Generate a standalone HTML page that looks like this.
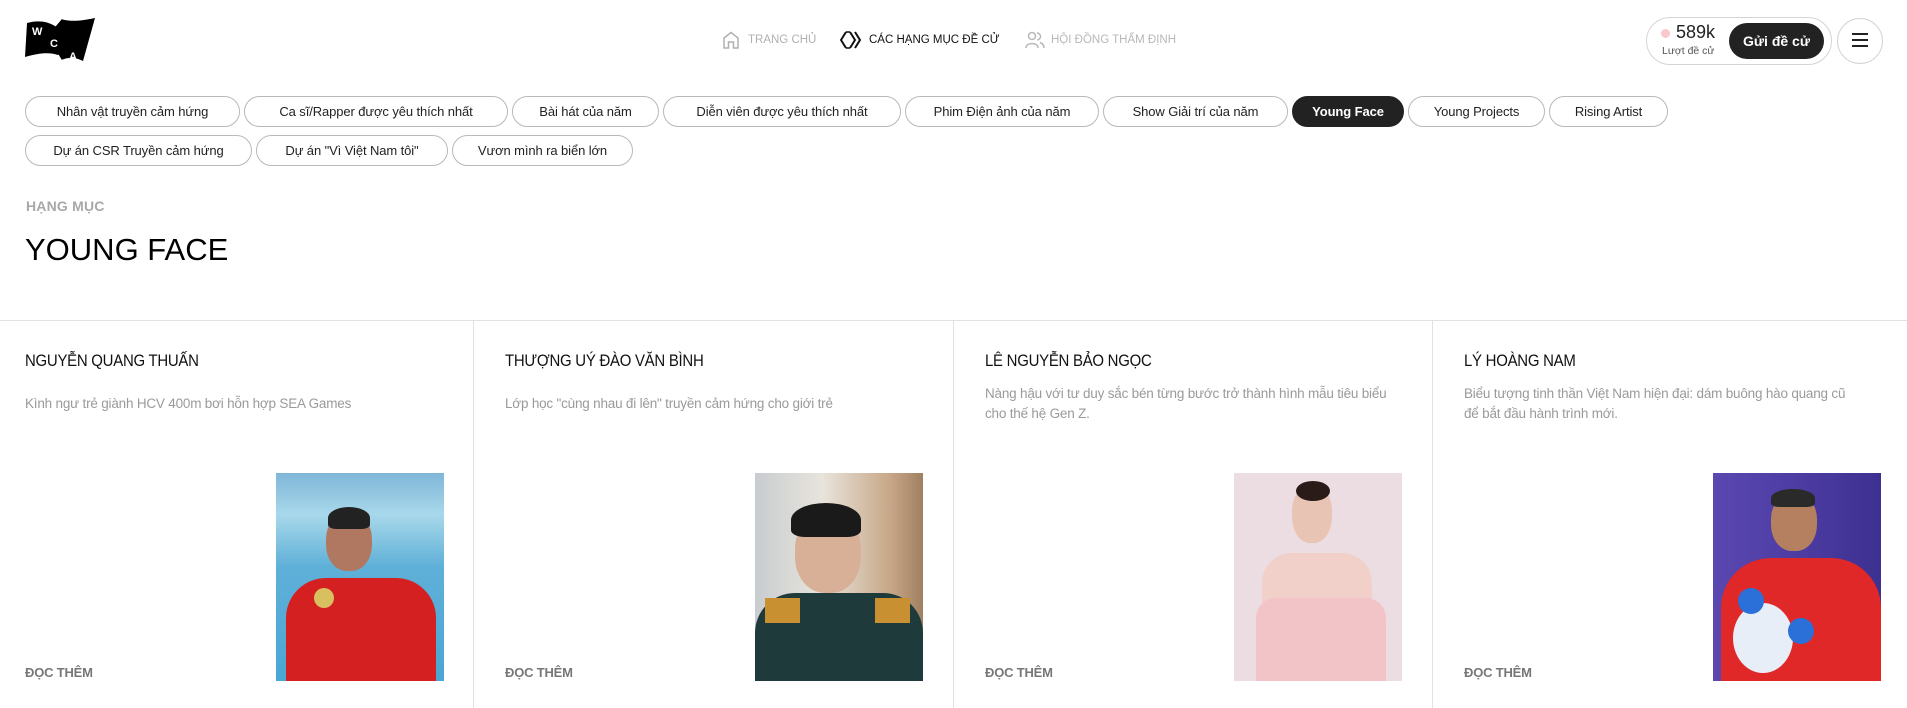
<!DOCTYPE html>
<html><head><meta charset="utf-8">
<style>
*{margin:0;padding:0;box-sizing:border-box}
body{width:1907px;height:708px;overflow:hidden;background:#fff;font-family:"Liberation Sans","Noto Sans CJK SC",sans-serif;color:#111;position:relative}
.abs{position:absolute}
.nav{top:31px;height:18px;font-size:11.5px;display:flex;align-items:center;white-space:nowrap}
.chip{position:absolute;height:31px;border:1px solid #b8b8b8;border-radius:16px;font-size:13px;color:#222;display:flex;align-items:center;justify-content:center;white-space:nowrap;letter-spacing:-0.1px}
.chip.on{background:#222;color:#fff;border-color:#222;font-weight:bold}
.name{position:absolute;top:351px;font-size:17px;letter-spacing:-0.3px;color:#111;white-space:nowrap;transform:scaleX(0.88);transform-origin:left center}
.desc{position:absolute;top:394px;font-size:13.5px;line-height:20px;color:#9a9a9a;width:400px;letter-spacing:-0.2px}
.more{position:absolute;top:665px;font-size:13px;color:#777;font-weight:bold;letter-spacing:-0.2px}
.img{position:absolute;top:473px;width:168px;height:208px;overflow:hidden}
.vl{position:absolute;top:321px;width:1px;height:387px;background:#e2e2e2}
</style></head><body>

<svg class="abs" style="left:25px;top:17px" width="72" height="46" viewBox="0 0 72 46">
<path d="M2 6 C12 3 22 4 30 9 L36 2 C46 5 56 4 70 1 L58 44 C50 40 44 40 36 43 L33 38 C24 35 14 36 0 40 Z" fill="#000"/>
<path d="M30 9 L36 2 M33 38 L36 43" stroke="#fff" stroke-width="1.5"/>
<text x="7" y="18" font-size="11" font-weight="bold" fill="#fff" font-family="Liberation Sans">W</text>
<text x="25" y="30" font-size="11" font-weight="bold" fill="#fff" font-family="Liberation Sans">C</text>
<text x="44" y="43" font-size="11" font-weight="bold" fill="#fff" font-family="Liberation Sans">A</text>
</svg>

<div class="abs nav" style="left:722px;color:#b0b0b0">
<svg width="18" height="18" viewBox="0 0 18 18"><path d="M2 17 V7 L9 1.5 L16 7 V17 H11.5 V11 H6.5 V17 Z" fill="none" stroke="#b0b0b0" stroke-width="1.5"/></svg>
<span style="margin-left:8px">TRANG CHỦ</span></div>
<div class="abs nav" style="left:840px;color:#111">
<svg width="22" height="18" viewBox="0 0 22 18"><path d="M6 1 L1 9 L6 17 M10 1 L15 9 L10 17 M15 1 L20 9 L15 17" fill="none" stroke="#111" stroke-width="2"/><path d="M6 1 L10 1 M6 17 L10 17" stroke="#111" stroke-width="1.5"/></svg>
<span style="margin-left:7px">CÁC HẠNG MỤC ĐỀ CỬ</span></div>
<div class="abs nav" style="left:1025px;color:#b8b8b8">
<svg width="20" height="18" viewBox="0 0 20 18"><circle cx="7" cy="5" r="3.5" fill="none" stroke="#b8b8b8" stroke-width="1.5"/><path d="M1 17 C1 11 13 11 13 17" fill="none" stroke="#b8b8b8" stroke-width="1.5"/><path d="M12 2 A3.5 3.5 0 0 1 12 9 M15 11.5 C17.5 12.5 19 14.5 19 17" fill="none" stroke="#b8b8b8" stroke-width="1.5"/></svg>
<span style="margin-left:6px">HỘI ĐỒNG THẨM ĐỊNH</span></div>

<div class="abs" style="left:1646px;top:17px;width:186px;height:48px;border:1px solid #d4d4d4;border-radius:24px"></div>
<div class="abs" style="left:1661px;top:29px;width:9px;height:9px;border-radius:50%;background:#f8c8cc"></div>
<div class="abs" style="left:1676px;top:22px;font-size:18px;color:#222">589k</div>
<div class="abs" style="left:1662px;top:45px;font-size:10.5px;color:#555">Lượt đề cử</div>
<div class="abs" style="left:1729px;top:23px;width:95px;height:36px;border-radius:18px;background:#222;color:#fff;font-weight:bold;font-size:14px;display:flex;align-items:center;justify-content:center">Gửi đề cử</div>
<div class="abs" style="left:1837px;top:18px;width:46px;height:46px;border:1px solid #d4d4d4;border-radius:50%"></div>
<div class="abs" style="left:1852px;top:33px;width:16px;height:2px;background:#222;box-shadow:0 6px 0 #222,0 12px 0 #222"></div>

<div class="chip" style="left:25px;top:96px;width:215px">Nhân vật truyền cảm hứng</div>
<div class="chip" style="left:244px;top:96px;width:264px">Ca sĩ/Rapper được yêu thích nhất</div>
<div class="chip" style="left:512px;top:96px;width:147px">Bài hát của năm</div>
<div class="chip" style="left:663px;top:96px;width:238px">Diễn viên được yêu thích nhất</div>
<div class="chip" style="left:905px;top:96px;width:194px">Phim Điện ảnh của năm</div>
<div class="chip" style="left:1103px;top:96px;width:185px">Show Giải trí của năm</div>
<div class="chip on" style="left:1292px;top:96px;width:112px">Young Face</div>
<div class="chip" style="left:1408px;top:96px;width:137px">Young Projects</div>
<div class="chip" style="left:1549px;top:96px;width:119px">Rising Artist</div>
<div class="chip" style="left:25px;top:135px;width:227px">Dự án CSR Truyền cảm hứng</div>
<div class="chip" style="left:256px;top:135px;width:192px">Dự án "Vì Việt Nam tôi"</div>
<div class="chip" style="left:452px;top:135px;width:181px">Vươn mình ra biển lớn</div>

<div class="abs" style="left:26px;top:198px;font-size:14px;color:#a8a8a8;font-weight:bold;letter-spacing:0.2px">HẠNG MỤC</div>
<div class="abs" style="left:25px;top:232px;font-size:31px;color:#000">YOUNG FACE</div>

<div class="abs" style="left:0;top:320px;width:1907px;height:1px;background:#e2e2e2"></div>
<div class="vl" style="left:473px"></div>
<div class="vl" style="left:953px"></div>
<div class="vl" style="left:1432px"></div>

<div class="name" style="left:25px">NGUYỄN QUANG THUẤN</div>
<div class="desc" style="left:25px;top:394px">Kình ngư trẻ giành HCV 400m bơi hỗn hợp SEA Games</div>
<div class="more" style="left:25px">ĐỌC THÊM</div>
<div class="img" style="left:276px;background:linear-gradient(180deg,#7fb6d8 0%,#a8d8ea 20%,#5fb0d8 45%,#4aa6d4 100%)">
<div class="abs" style="left:50px;top:40px;width:46px;height:58px;border-radius:45%;background:#b07860"></div>
<div class="abs" style="left:52px;top:34px;width:42px;height:22px;border-radius:50% 50% 20% 20%;background:#222"></div>
<div class="abs" style="left:10px;top:105px;width:150px;height:110px;border-radius:40px 40px 0 0;background:#d42020"></div>
<div class="abs" style="left:38px;top:115px;width:20px;height:20px;border-radius:50%;background:#d8c060"></div>
</div>

<div class="name" style="left:505px">THƯỢNG UÝ ĐÀO VĂN BÌNH</div>
<div class="desc" style="left:505px;top:394px">Lớp học "cùng nhau đi lên" truyền cảm hứng cho giới trẻ</div>
<div class="more" style="left:505px">ĐỌC THÊM</div>
<div class="img" style="left:755px;background:linear-gradient(90deg,#c8ccd0 0%,#e8e4dc 40%,#c8a888 80%,#a08060 100%)">
<div class="abs" style="left:40px;top:40px;width:66px;height:80px;border-radius:45%;background:#d8b098"></div>
<div class="abs" style="left:36px;top:30px;width:70px;height:34px;border-radius:50% 50% 20% 20%;background:#1a1a1a"></div>
<div class="abs" style="left:0;top:120px;width:168px;height:90px;border-radius:40px 40px 0 0;background:#1e3a3a"></div>
<div class="abs" style="left:10px;top:125px;width:35px;height:25px;background:#c89030"></div>
<div class="abs" style="left:120px;top:125px;width:35px;height:25px;background:#c89030"></div>
</div>

<div class="name" style="left:985px">LÊ NGUYỄN BẢO NGỌC</div>
<div class="desc" style="left:985px;top:384px;width:420px">Nàng hậu với tư duy sắc bén từng bước trở thành hình mẫu tiêu biểu cho thế hệ Gen Z.</div>
<div class="more" style="left:985px">ĐỌC THÊM</div>
<div class="img" style="left:1234px;background:#ecdde2">
<div class="abs" style="left:58px;top:12px;width:40px;height:58px;border-radius:45%;background:#e8c4b4"></div>
<div class="abs" style="left:62px;top:8px;width:34px;height:20px;border-radius:50%;background:#2a1a18"></div>
<div class="abs" style="left:28px;top:80px;width:110px;height:60px;border-radius:30px 30px 10px 10px;background:#f0d0c8"></div>
<div class="abs" style="left:22px;top:125px;width:130px;height:90px;border-radius:20px 20px 0 0;background:#f2c4c8"></div>
</div>

<div class="name" style="left:1464px">LÝ HOÀNG NAM</div>
<div class="desc" style="left:1464px;top:384px;width:392px">Biểu tượng tinh thần Việt Nam hiện đại: dám buông hào quang cũ để bắt đầu hành trình mới.</div>
<div class="more" style="left:1464px">ĐỌC THÊM</div>
<div class="img" style="left:1713px;background:linear-gradient(90deg,#5a48b0,#4a3aa0 60%,#3c3090)">
<div class="abs" style="left:58px;top:20px;width:46px;height:58px;border-radius:45%;background:#b48060"></div>
<div class="abs" style="left:58px;top:16px;width:44px;height:18px;border-radius:50% 50% 20% 20%;background:#2a2a2a"></div>
<div class="abs" style="left:8px;top:85px;width:160px;height:125px;border-radius:50px 50px 0 0;background:#e02828"></div>
<div class="abs" style="left:20px;top:130px;width:60px;height:70px;border-radius:50%;background:#e8eef8"></div>
<div class="abs" style="left:25px;top:115px;width:26px;height:26px;border-radius:50%;background:#2a70d8"></div>
<div class="abs" style="left:75px;top:145px;width:26px;height:26px;border-radius:50%;background:#2a70d8"></div>
</div>

</body></html>
